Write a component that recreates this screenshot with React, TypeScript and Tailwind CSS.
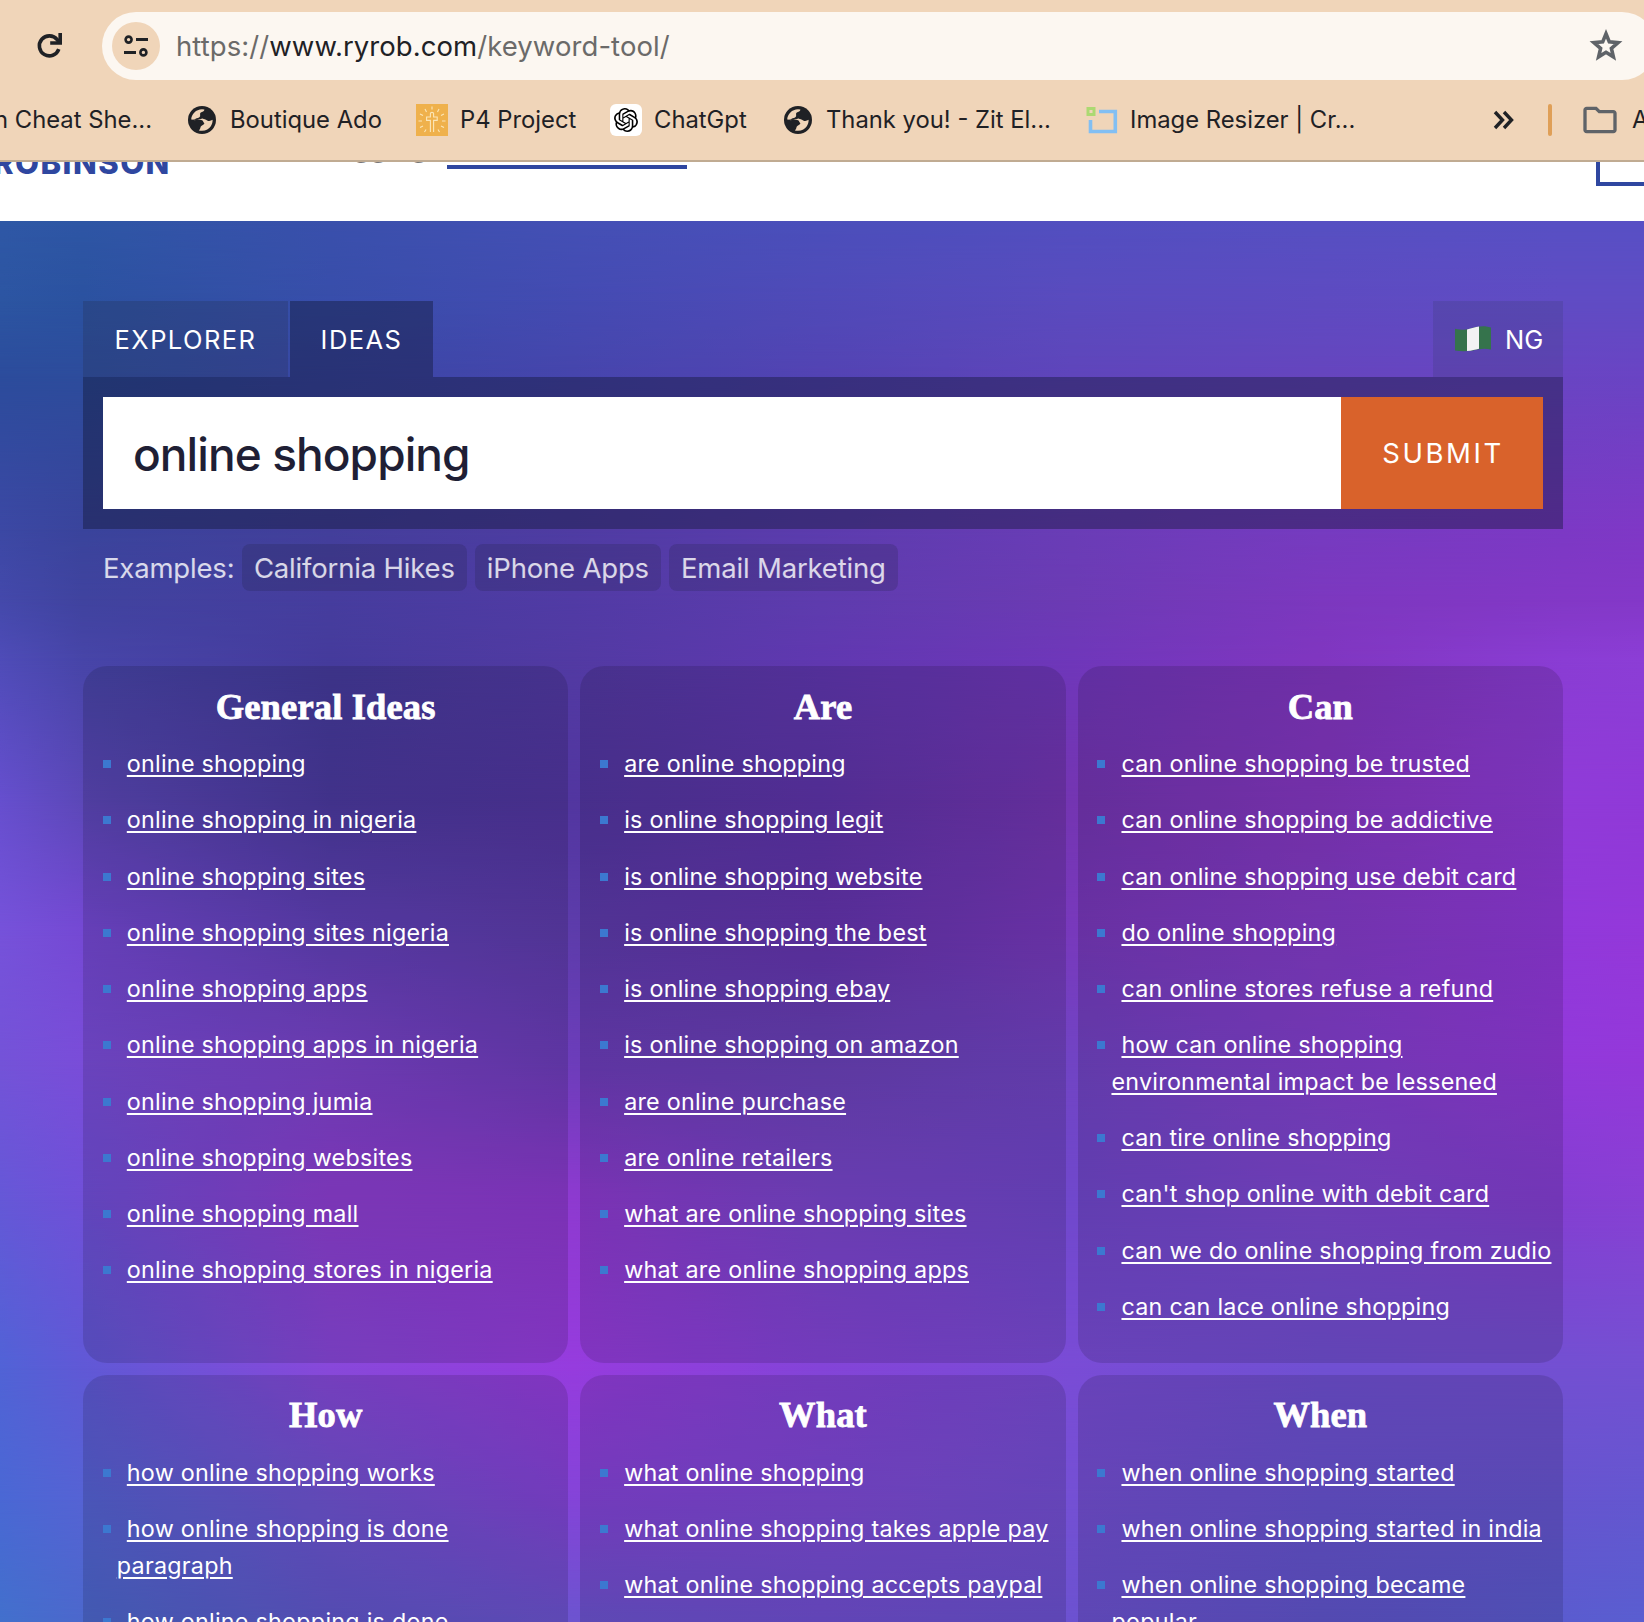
import React from "react";
import { SiOpenai } from "react-icons/si";
import { MdOutlineFolder } from "react-icons/md";

const STOPS = [0, 83, 330, 574, 820, 1072, 1320, 1563, 1644];
const TOP = 221;
const MESH: [number, string][] = [
  [221, "2f58a6 2e56a5 3a50ac 4450b5 4b4fbb 524fc0 5650c2 5850c4 5850c5"],
  [301, "2c55a2 2b52a0 384eaa 444bb2 504ab8 5a4bbe 5e4bc1 604cc4 604cc4"],
  [377, "2c4c9c 2d4c9c 3a47a5 4645ac 5343b3 5f45bb 6645be 6945c3 6a44c4"],
  [529, "3c48a4 3a449c 433f9b 4f3ca3 5c3cae 6a3db7 763bc0 7c39c5 7f38c6"],
  [600, "4449ab 40439f 463d9e 513ba5 5e3cae 6c3bb4 7c38bf 8338c6 8438c8"],
  [660, "4f4cb8 4745a8 453b9c 523aa3 6038b0 6f37ba 8036c0 8a3dd4 8c3ed6"],
  [800, "664fce 5c48b8 4b3a9f 5236a0 5e34a9 7435b2 8538c2 903bd8 9039d8"],
  [930, "7652da 7549d4 6141b8 5d3cab 6434ae 7839bc 833cc8 9139da 9438da"],
  [1060, "7453d8 7a4dd9 7c44cc 6c3dba 6a42b8 7144c4 8340ce 9239da 9438da"],
  [1200, "6558d7 7050d8 8e3fd2 8e3ad0 7a46cc 7048cc 7d48d0 843fd2 8840d4"],
  [1368, "5163d6 6059d6 8848da 963cde 8444d8 7a4cd6 7050d2 7350d2 7450d2"],
  [1500, "4a68d4 5563d4 7054d2 8444d8 7e4ad6 7450d4 6853d0 6655cf 6457d0"],
  [1622, "4270cc 4c68cc 6058cc 6c54cf 7050d2 6c52d0 6055cc 5a5ccf 5a5ed0"],
];

function Backdrop() {
  return (
    <>
      {MESH.map(([y, row], i) => {
        const colors = row.split(" ").map((c, k) => `#${c} ${STOPS[k]}px`).join(", ");
        const mask =
          i === 0
            ? undefined
            : `linear-gradient(to bottom, transparent ${MESH[i - 1][0] - TOP}px, black ${y - TOP}px)`;
        return (
          <div
            key={y}
            className="[grid-area:1/1]"
            style={{ backgroundImage: `linear-gradient(to right, ${colors})`, maskImage: mask }}
          />
        );
      })}
    </>
  );
}

const Globe = () => (
  <svg viewBox="0 0 28 28" className="size-7 shrink-0">
    <circle cx="14" cy="14" r="14" fill="#1f2125" />
    <path d="M3.200 13.600C3.400 8 8 3.300 14 3.200L16.400 3.600C16.400 5.600 14.200 5.600 12.800 6.600C11.400 7.600 12.600 9 12 10.400C11 12.200 8.800 11.600 7.600 12.800C6.400 14 4.600 13.600 3.200 13.600Z" fill="#f0d5b8" />
    <path d="M4.200 14.800C7 13.400 12 13.400 14 14.200C15.400 14.800 15.200 16.400 16.400 17.200C16.200 19 13.600 19 12.800 20.600C12 22.200 12.400 23.400 10.800 24.400C16 25.800 20.800 23.600 22.800 20.200C24.200 18 24.700 16 24.600 13.800C22.800 15 20.800 15.400 19.200 14.400C17.600 13.200 16 13.400 14.600 12.600L12.600 13Z" fill="#f0d5b8" />
  </svg>
);

const Cross = () => (
  <svg viewBox="0 0 32 32" className="size-8 shrink-0 bg-[#efb14c]">
    <g fill="none" stroke="#fbe6b8" strokeWidth="1.1">
      <path d="M14.4 28V16.4H10.6V13H14.4V9.4C14.4 8 17.6 8 17.6 9.4V13H21.2V16.4H17.6V28" />
      <path d="M16 2.5V5.5M9 5L10.5 8M23 5L21.5 8M4 10L7 11.5M28 10L25 11.5M2.5 17H6M29.500 17H26M4 23.500L7 22M28 23.500L25 22M8.500 28L10 25.500M23.500 28L22 25.500" />
    </g>
  </svg>
);

const Resizer = () => (
  <svg viewBox="0 0 32 32" className="size-8 shrink-0" fill="none">
    <path d="M13 7.500H29.300V27.500H4.500V16" stroke="#82bff3" strokeWidth="3.600" />
    <rect x="2" y="4.500" width="6" height="6" stroke="#acd972" strokeWidth="3" />
  </svg>
);

const ideas: { title: string; items: string[] }[] = [
  {
    title: "General Ideas",
    items: [
      "online shopping",
      "online shopping in nigeria",
      "online shopping sites",
      "online shopping sites nigeria",
      "online shopping apps",
      "online shopping apps in nigeria",
      "online shopping jumia",
      "online shopping websites",
      "online shopping mall",
      "online shopping stores in nigeria",
    ],
  },
  {
    title: "Are",
    items: [
      "are online shopping",
      "is online shopping legit",
      "is online shopping website",
      "is online shopping the best",
      "is online shopping ebay",
      "is online shopping on amazon",
      "are online purchase",
      "are online retailers",
      "what are online shopping sites",
      "what are online shopping apps",
    ],
  },
  {
    title: "Can",
    items: [
      "can online shopping be trusted",
      "can online shopping be addictive",
      "can online shopping use debit card",
      "do online shopping",
      "can online stores refuse a refund",
      "how can online shopping\nenvironmental impact be lessened",
      "can tire online shopping",
      "can't shop online with debit card",
      "can we do online shopping from zudio",
      "can can lace online shopping",
    ],
  },
  {
    title: "How",
    items: ["how online shopping works", "how online shopping is done\nparagraph", "how online shopping is done"],
  },
  {
    title: "What",
    items: ["what online shopping", "what online shopping takes apple pay", "what online shopping accepts paypal"],
  },
  {
    title: "When",
    items: ["when online shopping started", "when online shopping started in india", "when online shopping became\npopular"],
  },
];

function Card({ title, items }: { title: string; items: string[] }) {
  return (
    <section className="rounded-[24px] bg-black/13 pt-[18.500px] pb-[37.300px]">
      <h2 className="text-center font-['Liberation_Serif'] text-[36.500px] leading-[44px] font-bold tracking-[0.150px] text-white [-webkit-text-stroke:0.8px_white]">
        {title}
      </h2>
      <ul className="mt-[17.500px] flex flex-col gap-[19.670px]">
        {items.map((t) => (
          <li key={t} className="flex gap-[6.300px] pl-[19.500px]">
            <span className="mt-[14px] size-2 shrink-0 bg-[#3c78d0]" />
            <a className="whitespace-pre text-[23.300px] leading-[36.600px] tracking-[0.260px] text-white underline decoration-2 underline-offset-[3px] [text-indent:10px]">
              {t}
            </a>
          </li>
        ))}
      </ul>
    </section>
  );
}

export default function App() {
  return (
    <div className="flex h-[1622px] w-[1644px] flex-col overflow-hidden bg-white font-['Inter',sans-serif]">
      <header className="h-[162px] shrink-0 overflow-hidden border-b-2 border-[#c0ab92] bg-[#f0d5b9]">
        <div className="flex h-[80px] w-[1656px] items-center pt-3">
          <div className="flex w-[102px] shrink-0 pl-[34px]">
            <svg viewBox="0 0 32 32" className="size-8" fill="none" stroke="#1f2125" strokeWidth="3.600">
              <path d="M24.800 19.200A10 10 0 1 1 23.200 9.600L25 12" />
              <path d="M26.200 3V13H16.200" />
            </svg>
          </div>
          <div className="flex h-[68px] flex-1 items-center rounded-full bg-[#fcf7f1] pl-[10px]">
            <div className="flex size-12 items-center justify-center rounded-full bg-[#f0d5b9]">
              <svg viewBox="0 0 24 24" className="size-6" fill="none" stroke="#1f2125" strokeWidth="3">
                <circle cx="4.600" cy="5.600" r="3" strokeWidth="2.600" />
                <path d="M12 5.600H24M0 18.400H12" />
                <circle cx="19.400" cy="18.400" r="3" strokeWidth="2.600" />
              </svg>
            </div>
            <div className="pt-[2px] pl-4 text-[27.500px] tracking-[0.070px] text-[#6b6a69]">
              https://<span className="text-[#1f2125]">www.ryrob.com</span>/keyword-tool/
            </div>
            <svg viewBox="0 0 36 36" className="mr-[32px] ml-auto size-9" fill="none" stroke="#5f6368" strokeWidth="3.600">
              <path d="M18 5.800L21.300 13.900L30 14.600L23.400 20.300L25.400 28.900L18 24.300L10.600 28.900L12.600 20.300L6 14.600L14.700 13.900Z" />
            </svg>
          </div>
        </div>
        <div className="flex h-20 w-[1700px] items-center text-[23.800px] whitespace-nowrap text-[#1f2125]">
          <div className="flex w-[188px] shrink-0 justify-end pr-[36px]">Python Cheat She...</div>
          <div className="flex w-[228px] shrink-0 items-center gap-[14px]"><Globe />Boutique Ado</div>
          <div className="flex w-[194px] shrink-0 items-center gap-3"><Cross />P4 Project</div>
          <div className="flex w-[174px] shrink-0 items-center gap-3">
            <span className="flex size-8 items-center justify-center rounded-md bg-white"><SiOpenai className="size-6 text-black" /></span>
            ChatGpt
          </div>
          <div className="flex w-[302px] shrink-0 items-center gap-[14px]"><Globe />Thank you! - Zit El...</div>
          <div className="flex w-[406px] shrink-0 items-center gap-3"><Resizer />Image Resizer | Cr...</div>
          <svg viewBox="0 0 24 20" className="h-5 w-6 shrink-0" fill="none" stroke="#1f2125" strokeWidth="3.400">
            <path d="M3 2L10.500 10L3 18M12 2L19.500 10L12 18" />
          </svg>
          <span className="ml-8 h-8 w-1 shrink-0 rounded-full bg-[#df9f57]" />
          <MdOutlineFolder className="ml-[28px] size-10 shrink-0 text-[#5f6368]" />
          <span className="ml-[12px]">All Bookmarks</span>
        </div>
      </header>

      <nav className="flex h-[59px] shrink-0 items-start overflow-hidden">
        <div className="flex w-[447px] shrink-0 items-start">
          <span className="-mt-[15px] -ml-[7px] w-[318px] text-[31px] leading-[31px] font-extrabold tracking-[1.500px] text-[#2f47a0]">ROBINSON</span>
          <span className="-mt-[27px] text-[28px] leading-6 text-[#777]">Blogging</span>
        </div>
        <div className="mt-[3px] h-1 w-[240px] bg-[#2f47a0]" />
        <div className="ml-auto h-6 w-12 border-b-4 border-l-4 border-[#2f47a0]" />
      </nav>

      <main className="grid h-[1401px] shrink-0 grid-cols-[1644px] grid-rows-[1401px] overflow-hidden">
        <Backdrop />
        <div className="z-10 flex flex-col px-[83px] pt-20 pr-[81px] [grid-area:1/1]">
          <div className="flex h-[76px] shrink-0 text-[25.500px] tracking-[1.450px] text-white">
            <div className="flex w-[205px] items-center justify-center bg-[#222c48]/25 pt-[2px]">EXPLORER</div>
            <div className="ml-[2px] flex w-[143px] items-center justify-center bg-[#0f1430]/40 pt-[2px]">IDEAS</div>
            <div className="ml-auto flex w-[130px] items-center bg-[#3c3c78]/25 pt-[2px] pl-[22px] tracking-normal">
              <svg viewBox="0 0 36 26" className="mr-[14px] mb-[2px] h-[26px] w-9">
                <path d="M0 2.700C6 4 10 4 14 3C20 1 26 0 30 0.300L36 1.500V23.500C30 22 24 23 18 24.400C12 25.300 6 25.400 0 24.500Z" fill="#35734c" />
                <path d="M12 3.400C17 2.400 20 1 24 0.600V22.800C20 23.600 17 24.800 12 25Z" fill="#f2f2f4" />
              </svg>
              NG
            </div>
          </div>
          <div className="flex h-[152px] shrink-0 bg-[#0f1430]/40 p-5">
            <div className="flex flex-1 items-center bg-white pt-[2px] pl-[30px] text-[46px] font-medium tracking-[-0.920px] text-[#1f1f35]">online shopping</div>
            <div className="flex w-[202px] items-center justify-center bg-[#d9622b] pt-px pl-[2px] text-[27.500px] font-[370] tracking-[2.600px] text-white">SUBMIT</div>
          </div>
          <div className="mt-[15px] flex h-[47px] shrink-0 items-center gap-2 pl-5 text-[27.500px] tracking-[-0.180px] text-white/80">
            <span className="-mr-[0.500px] pt-[2px]">Examples:</span>
            <span className="rounded-lg bg-[#1e1e3c]/20 px-3 pt-px leading-[46px]">California Hikes</span>
            <span className="rounded-lg bg-[#1e1e3c]/20 px-3 pt-px leading-[46px]">iPhone Apps</span>
            <span className="rounded-lg bg-[#1e1e3c]/20 px-3 pt-px leading-[46px]">Email Marketing</span>
          </div>
          <div className="mt-[75px] grid shrink-0 grid-cols-3 gap-3">
            {ideas.map((c) => (
              <Card key={c.title} {...c} />
            ))}
          </div>
        </div>
      </main>
    </div>
  );
}
